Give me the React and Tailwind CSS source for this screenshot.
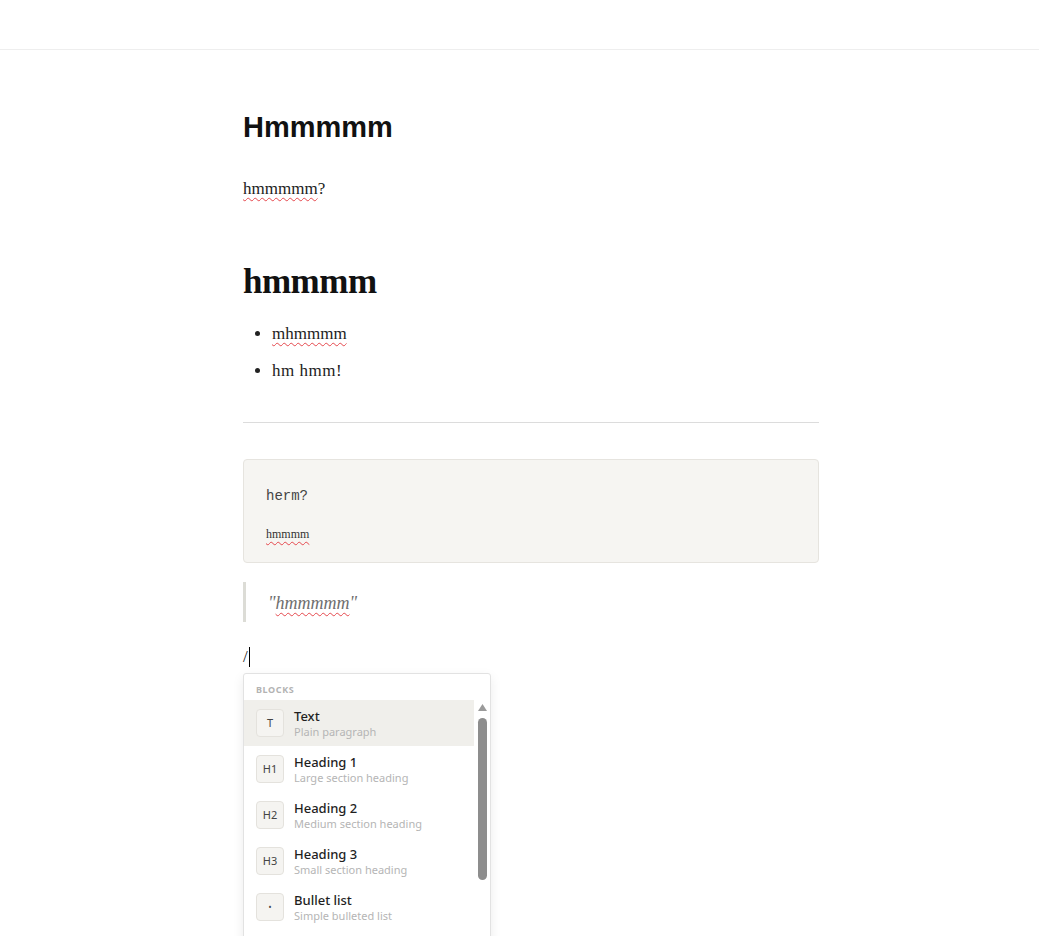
import React from "react";

const serif = { fontFamily: '"Liberation Serif", "Times New Roman", serif' };
const sq = "underline decoration-wavy decoration-[#e5484d] decoration-1 underline-offset-[3px]";

const items = [
  { icon: "T", title: "Text", sub: "Plain paragraph", active: true },
  { icon: "H1", title: "Heading 1", sub: "Large section heading" },
  { icon: "H2", title: "Heading 2", sub: "Medium section heading" },
  { icon: "H3", title: "Heading 3", sub: "Small section heading" },
  { icon: "•", title: "Bullet list", sub: "Simple bulleted list" },
];

export default function App() {
  return (
    <div className="h-[936px] w-full overflow-hidden bg-white text-[#222]">
      <div className="h-[50px] border-b border-[#eeeeee]" />
      <div className="ml-[243px] w-[576px]">
        <h1
          className="mt-[60px] text-[29px] leading-[35px] font-bold text-[#111]"
          style={{ fontFamily: '"Liberation Sans", Arial, sans-serif' }}
        >
          Hmmmmm
        </h1>
        <p className="mt-[30px] text-[17px] leading-[28px]" style={serif}>
          <span className={sq}>hmmmmm</span>?
        </p>
        <h2 className="mt-[58px] text-[35px] leading-[42px] font-bold text-[#111] tracking-[-0.5px]" style={serif}>
          hmmmm
        </h2>
        <ul className="mt-[17px] list-disc pl-[29px] text-[17px] leading-[28px]" style={serif}>
          <li>
            <span className={sq}>mhmmmm</span>
          </li>
          <li className="mt-[9px] tracking-[0.5px]">hm hmm!</li>
        </ul>
        <div className="mt-[37px] h-px bg-[#dcdcdc]" />
        <div className="mt-[36px] h-[104px] rounded-[4px] border border-[#e6e4df] bg-[#f6f5f2] px-[22px] pt-[26px]">
          <div
            className="text-[14px] leading-[20px] text-[#444]"
            style={{ fontFamily: '"Liberation Mono", "Courier New", monospace' }}
          >
            herm?
          </div>
          <div className="mt-[20px] text-[12px] leading-[16px] text-[#333]" style={serif}>
            <span className={sq}>hmmmm</span>
          </div>
        </div>
        <div className="mt-[19px] h-[40px] border-l-[3px] border-[#dcdcd6] pl-[22px]">
          <div className="text-[18px] leading-[42px] italic text-[#6e6e6e]" style={serif}>
            "<span className={sq}>hmmmmm</span>"
          </div>
        </div>
        <div className="mt-[21px] flex h-[28px] items-center text-[17px] leading-[28px]" style={serif}>
          <span>/</span>
          <span className="ml-px inline-block h-[20px] w-px bg-black" />
        </div>
        <div
          className="mt-[2px] w-[248px] rounded-[3px] border border-[#e2e2e2] bg-white shadow-[0_4px_12px_rgba(0,0,0,0.08)]"
          style={{ fontFamily: '"Noto Sans", "Open Sans", sans-serif' }}
        >
          <div className="px-[12px] pt-[10px] pb-[4px] text-[9px] leading-[12px] font-bold tracking-[0.6px] text-[#b3b3b3]">
            BLOCKS
          </div>
          <div className="flex">
            <div className="w-[231px] pb-[40px]">
              {items.map((it) => (
                <div
                  key={it.title}
                  className={
                    "flex h-[46px] items-center gap-[10px] pl-[12px] " +
                    (it.active ? "bg-[#f0efeb]" : "")
                  }
                >
                  <div className="flex h-[28px] w-[28px] items-center justify-center rounded-[4px] border border-[#e4e2dd] bg-[#f5f4f1] text-[11px] text-[#444]">
                    {it.icon === "•" ? <span className="text-[8px]">•</span> : it.icon}
                  </div>
                  <div className="flex flex-col">
                    <div className="text-[13px] leading-[17px] font-medium text-[#1f1f1f]">{it.title}</div>
                    <div className="text-[11px] leading-[14px] text-[#b5b5b5]">{it.sub}</div>
                  </div>
                </div>
              ))}
            </div>
            <div className="flex w-[16px] flex-col items-center pt-[4px] pl-[1px]">
              <svg width="9" height="7" viewBox="0 0 9 7">
                <polygon points="4.5,0 9,7 0,7" fill="#9a9a9a" />
              </svg>
              <div className="mt-[7px] h-[162px] w-[9px] rounded-full bg-[#8d8d8d]" />
            </div>
          </div>
        </div>
      </div>
    </div>
  );
}
